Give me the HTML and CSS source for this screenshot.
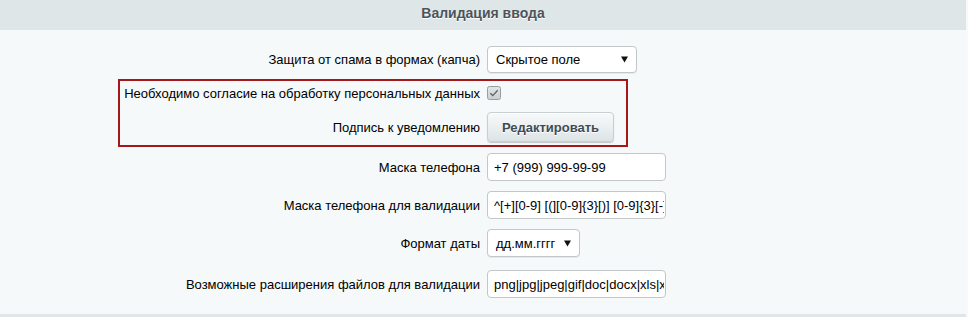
FILE: index.html
```html
<!DOCTYPE html>
<html lang="ru">
<head>
<meta charset="utf-8">
<title>Валидация ввода</title>
<link rel="stylesheet" href="styles.css">
</head>
<body>
<div class="panel">
  <div class="head">Валидация ввода</div>
  <div class="content">
    <div class="row r1">
      <div class="lbl">Защита от спама в формах (капча)</div>
      <div class="ctl">
        <div class="select sel-captcha"><span>Скрытое поле</span><svg class="arrow" width="7" height="7" viewBox="0 0 7 7"><path d="M0 0.5H7L3.5 6.5Z" fill="#111"/></svg></div>
      </div>
    </div>
    <div class="row r2">
      <div class="lbl">Необходимо согласие на обработку персональных данных</div>
      <div class="ctl">
        <svg class="check" width="14" height="14" viewBox="0 0 14 14">
          <defs><linearGradient id="cg" x1="0" y1="0" x2="0" y2="1"><stop offset="0" stop-color="#e2e6e7"/><stop offset="1" stop-color="#c9cfd1"/></linearGradient></defs>
          <rect x="0.5" y="0.5" width="13" height="13" rx="2" fill="url(#cg)" stroke="#969ea1"/>
          <path d="M3.3 7.2L5.8 9.6L10.7 4.2" fill="none" stroke="#5d676b" stroke-width="1.4"/>
        </svg>
      </div>
    </div>
    <div class="row r3">
      <div class="lbl">Подпись к уведомлению</div>
      <div class="ctl"><button class="btn" type="button">Редактировать</button></div>
    </div>
    <div class="row r4">
      <div class="lbl">Маска телефона</div>
      <div class="ctl"><input class="inp" type="text" value="+7 (999) 999-99-99"></div>
    </div>
    <div class="row r5">
      <div class="lbl">Маска телефона для валидации</div>
      <div class="ctl"><input class="inp" type="text" value="^[+][0-9] [(][0-9]{3}[)] [0-9]{3}[-][0-9]{2}[-][0-9]{2}$"></div>
    </div>
    <div class="row r6">
      <div class="lbl">Формат даты</div>
      <div class="ctl">
        <div class="select sel-date"><span>дд.мм.гггг</span><svg class="arrow" width="7" height="7" viewBox="0 0 7 7"><path d="M0 0.5H7L3.5 6.5Z" fill="#111"/></svg></div>
      </div>
    </div>
    <div class="row r7">
      <div class="lbl">Возможные расширения файлов для валидации</div>
      <div class="ctl"><input class="inp" type="text" value="png|jpg|jpeg|gif|doc|docx|xls|xlsx|txt|pdf"></div>
    </div>
    <div class="mark"></div>
  </div>
  <div class="foot"></div>
</div>
</body>
</html>
```

FILE: styles.css
```css
html, body {
  margin: 0;
  padding: 0;
  background: #f8fafa;
}
body {
  font-family: "Liberation Sans", Arial, sans-serif;
  font-size: 13px;
  color: #000;
}
.panel {
  width: 966px;
  background: #f5f9f9;
}
.head {
  height: 30px;
  line-height: 27px;
  background: #dfe6e8;
  text-align: center;
  font-weight: bold;
  font-size: 14px;
  color: #4b5559;
  text-shadow: 0 1px #fff;
}
.content {
  position: relative;
  padding: 12px 0 11px;
}
.row {
  display: flex;
  align-items: center;
  height: 34px;
}
.r4 { margin-top: 4px; height: 38px; }
.r5, .r6 { height: 38px; }
.r7 { margin-top: 3px; height: 38px; }
.lbl {
  flex: 0 0 480px;
  text-align: right;
  white-space: nowrap;
}
.ctl {
  margin-left: 7px;
  display: flex;
  align-items: center;
}
.select {
  box-sizing: border-box;
  height: 27px;
  display: flex;
  align-items: center;
  justify-content: space-between;
  padding: 0 8px 0 8px;
  background: #fff;
  border: 1px solid #c2c7c9;
  border-radius: 4px;
  box-shadow: 0 1px 0 rgba(0,0,0,0.06);
}
.sel-captcha { width: 150px; }
.sel-date { width: 93px; height: 28px; }
.arrow { display: block; }
.check { display: block; }
.btn {
  box-sizing: border-box;
  width: 127px;
  height: 30px;
  padding: 0;
  font-family: "Liberation Sans", Arial, sans-serif;
  font-size: 13px;
  font-weight: bold;
  color: #3f4b54;
  text-shadow: 0 1px #fff;
  background: linear-gradient(#f8fafa, #dde4e6);
  border: 1px solid #c7cfd2;
  border-radius: 4px;
  box-shadow: 0 1px 1px rgba(0,0,0,0.2), inset 0 1px 0 #fff;
}
.inp {
  box-sizing: border-box;
  width: 179px;
  height: 28px;
  padding: 0 1px 0 6px;
  margin: 0;
  font-family: "Liberation Sans", Arial, sans-serif;
  font-size: 13px;
  color: #000;
  background: #fff;
  border: 1px solid #c2c7c9;
  border-radius: 4px;
  outline: none;
}
.mark {
  position: absolute;
  left: 118px;
  top: 49px;
  width: 510px;
  height: 68px;
  box-sizing: border-box;
  border: 2px solid #a3191b;
  pointer-events: none;
}
.foot {
  height: 3px;
  background: #dfe6e8;
}
```
